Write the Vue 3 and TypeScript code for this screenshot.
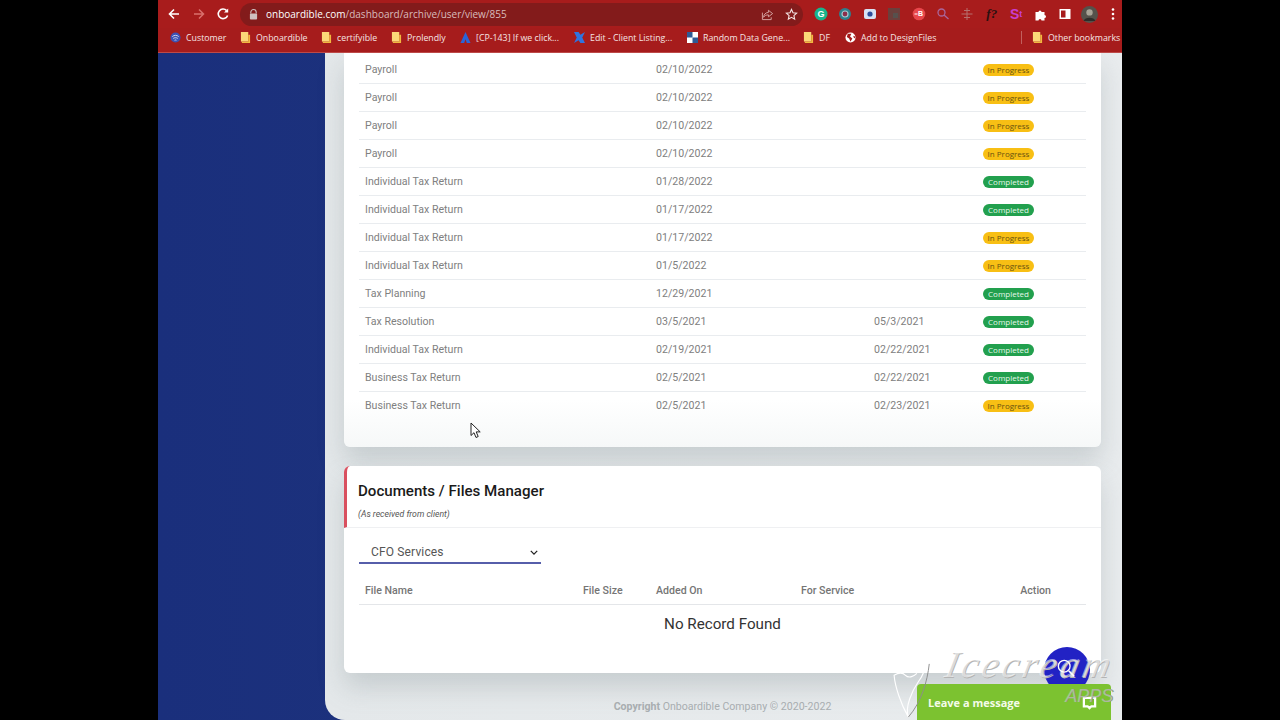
<script setup lang="ts">
interface Row {
  name: string;
  added: string;
  done?: string;
  status: 'In Progress' | 'Completed';
}

const rows: Row[] = [
  { name: 'Payroll', added: '02/10/2022', status: 'In Progress' },
  { name: 'Payroll', added: '02/10/2022', status: 'In Progress' },
  { name: 'Payroll', added: '02/10/2022', status: 'In Progress' },
  { name: 'Payroll', added: '02/10/2022', status: 'In Progress' },
  { name: 'Individual Tax Return', added: '01/28/2022', status: 'Completed' },
  { name: 'Individual Tax Return', added: '01/17/2022', status: 'Completed' },
  { name: 'Individual Tax Return', added: '01/17/2022', status: 'In Progress' },
  { name: 'Individual Tax Return', added: '01/5/2022', status: 'In Progress' },
  { name: 'Tax Planning', added: '12/29/2021', status: 'Completed' },
  { name: 'Tax Resolution', added: '03/5/2021', done: '05/3/2021', status: 'Completed' },
  { name: 'Individual Tax Return', added: '02/19/2021', done: '02/22/2021', status: 'Completed' },
  { name: 'Business Tax Return', added: '02/5/2021', done: '02/22/2021', status: 'Completed' },
  { name: 'Business Tax Return', added: '02/5/2021', done: '02/23/2021', status: 'In Progress' },
];

const bookmarks = [
  { label: 'Customer', icon: 'globe', width: 70 },
  { label: 'Onboardible', icon: 'folder', width: 81 },
  { label: 'certifyible', icon: 'folder', width: 70 },
  { label: 'Prolendly', icon: 'folder', width: 69 },
  { label: '[CP-143] If we click...', icon: 'atlas', width: 114 },
  { label: 'Edit - Client Listing...', icon: 'cross', width: 113 },
  { label: 'Random Data Gene...', icon: 'grid', width: 116 },
  { label: 'DF', icon: 'folder', width: 42 },
  { label: 'Add to DesignFiles', icon: 'earth', width: 176 },
];
</script>

<template>
  <div class="stage">
    <div class="browser">
      <header class="toolbar">
        <div class="nav">
          <svg class="nav-icon" viewBox="0 0 16 16"><path d="M13 8H4M8 3.5 3.5 8 8 12.5" fill="none" stroke="#fff" stroke-width="1.6" /></svg>
          <svg class="nav-icon" viewBox="0 0 16 16"><path d="M3 8h9M8 3.5 12.5 8 8 12.5" fill="none" stroke="#d9706c" stroke-width="1.5" /></svg>
          <svg class="nav-icon" viewBox="0 0 16 16"><path d="M12.6 9.4A4.8 4.8 0 1 1 11.6 4.6" fill="none" stroke="#fff" stroke-width="1.6" /><path d="M13.2 2.4v4.2H9z" fill="#fff" /></svg>
        </div>
        <div class="omnibox">
          <svg class="lock" viewBox="0 0 10 12"><path d="M2 5V3.5a3 3 0 0 1 6 0V5" fill="none" stroke="#cfc0c0" stroke-width="1.2" /><rect x="1" y="5" width="8" height="6.5" rx="1" fill="#cfc0c0" /></svg>
          <span class="url"><b>onboardible.com</b>/dashboard/archive/user/view/855</span>
          <svg class="omni-icon share" viewBox="0 0 14 14"><path d="M8 2.5 12.5 6 8 9.5V7.4C5.500 7.400 4 8.200 2.800 10 3 7 4.800 5 8 4.700z M1.500 5v7.500h9.500V10" fill="none" stroke="#d8a9a6" stroke-width="1" /></svg>
          <svg class="omni-icon" viewBox="0 0 14 14"><path d="m7 1.600 1.600 3.600 3.900.4-2.900 2.600.8 3.800L7 10.100l-3.400 2 .8-3.800L1.500 5.600l3.900-.4z" fill="none" stroke="#f3e4e3" stroke-width="1.200" /></svg>
        </div>
        <div class="extensions">
          <span class="ext"><svg viewBox="0 0 14 14"><circle cx="7" cy="7" r="6.500" fill="#19b58d" /><text x="7" y="10" text-anchor="middle" class="ext-text" fill="#fff">G</text></svg></span>
          <span class="ext"><svg viewBox="0 0 14 14"><circle cx="7" cy="7" r="6" fill="#2e7f8e" /><circle cx="7" cy="7" r="3" fill="#8b2d4b" stroke="#a5cbd2" stroke-width="1.200" /></svg></span>
          <span class="ext"><svg viewBox="0 0 14 14"><rect x="1" y="2" width="12" height="10" rx="2" fill="#d7e2f5" /><circle cx="7" cy="7" r="2.600" fill="#2d4d9c" /></svg></span>
          <span class="ext"><svg viewBox="0 0 14 14"><rect x="1" y="1" width="12" height="12" fill="#6c3f3c" /><rect x="6" y="6" width="5" height="5" fill="#57504d" /></svg></span>
          <span class="ext"><svg viewBox="0 0 14 14"><circle cx="7" cy="7" r="6.300" fill="#e8474c" /><text x="8.500" y="9.300" text-anchor="middle" class="ext-small" fill="#fff">B</text><path d="M2.500 7h3" stroke="#fff" stroke-width="1" /></svg></span>
          <span class="ext"><svg viewBox="0 0 14 14"><circle cx="5.500" cy="5.500" r="3.500" fill="none" stroke="#a9679c" stroke-width="1.300" /><path d="m8 8 4.500 4" stroke="#a9679c" stroke-width="1.300" /></svg></span>
          <span class="ext"><svg viewBox="0 0 14 14"><path d="M7 1v12M1.500 7h11M4 3.500h6M4 10.500h6" stroke="#b66f6c" stroke-width="1" /></svg></span>
          <span class="ext ext-f">f?</span>
          <span class="ext ext-s">S<small>t</small></span>
          <span class="ext"><svg viewBox="0 0 14 14"><path d="M1.500 5h3a1.500 1.500 0 1 1 3 0h3v3a1.500 1.500 0 1 1 0 3v2.500h-3a1.500 1.500 0 1 0-3 0h-3z" fill="#fff" /></svg></span>
          <span class="ext"><svg viewBox="0 0 14 14"><rect x="1.500" y="2" width="11" height="10" fill="#fff" /><rect x="3" y="3.500" width="4.500" height="7" fill="#a81c1c" /></svg></span>
          <span class="ext ext-avatar"><svg viewBox="0 0 16 16"><circle cx="8" cy="8" r="8" fill="#55524b" /><circle cx="8" cy="6" r="3" fill="#a9a497" /><path d="M2.500 14c1-4 10-4 11 0" fill="#2e2c29" /></svg></span>
          <span class="ext ext-menu"><svg viewBox="0 0 14 14"><circle cx="7" cy="2.500" r="1.300" fill="#fff" /><circle cx="7" cy="7" r="1.300" fill="#fff" /><circle cx="7" cy="11.500" r="1.300" fill="#fff" /></svg></span>
        </div>
      </header>

      <nav class="bookmarks">
        <div v-for="b in bookmarks" :key="b.label" class="bookmark" :style="{ width: b.width + 'px' }">
          <svg class="bm-icon" viewBox="0 0 12 12">
            <template v-if="b.icon === 'folder'">
              <path d="M1 0h8v10.500H1z" fill="#fbd878" />
              <path d="M9 3h2v9H2v-1.500h7z" fill="#f2b840" />
            </template>
            <template v-else-if="b.icon === 'globe'">
              <circle cx="6" cy="6" r="5.500" fill="#3c52b5" />
              <path d="M2.500 5c2-1.800 5-1.800 7 0M3.500 7c1.500-1 3.500-1 5 0M5 9c.7-.4 1.300-.4 2 0" fill="none" stroke="#d9def0" stroke-width="1" />
            </template>
            <template v-else-if="b.icon === 'atlas'">
              <path d="M6 0 11.500 12H7.500L6 8 4.500 12H.5z" fill="#2a64d8" />
            </template>
            <template v-else-if="b.icon === 'cross'">
              <path d="M0 0h5l2 3 5-3-3 6 3 6H7L5 9 0 12l3-6z" fill="#2f74e0" />
            </template>
            <template v-else-if="b.icon === 'grid'">
              <rect width="12" height="12" fill="#fff" />
              <rect width="6" height="6" fill="#2e5b96" />
              <rect x="6" y="6" width="6" height="6" fill="#2e5b96" />
            </template>
            <template v-else>
              <circle cx="6" cy="6" r="5.500" fill="#fff" />
              <path d="M3 2h4L5.500 5 8 7 6 10.500 4.500 7 2 5.500z M9 4l2 1v2l-1.500-1z" fill="#a61c1c" />
            </template>
          </svg>
          <span>{{ b.label }}</span>
        </div>
        <div class="bm-divider"></div>
        <div class="bookmark">
          <svg class="bm-icon" viewBox="0 0 12 12"><path d="M1 0h8v10.500H1z" fill="#fbd878" /><path d="M9 3h2v9H2v-1.500h7z" fill="#f2b840" /></svg>
          <span>Other bookmarks</span>
        </div>
      </nav>

      <div class="page">
        <aside class="sidebar"></aside>
        <main class="main">
          <section class="card card-services">
            <div v-for="(r, i) in rows" :key="i" class="row">
              <span>{{ r.name }}</span>
              <span>{{ r.added }}</span>
              <span>{{ r.done }}</span>
              <span>
                <em class="badge" :class="r.status === 'Completed' ? 'badge-done' : 'badge-progress'">{{ r.status }}</em>
              </span>
            </div>
          </section>

          <section class="card card-docs">
            <div class="docs-head">
              <h2>Documents / Files Manager</h2>
              <p>(As received from client)</p>
            </div>
            <div class="docs-body">
              <div class="select">
                <span>CFO Services</span>
                <svg viewBox="0 0 10 6"><path d="m1 1 4 4 4-4" fill="none" stroke="#222" stroke-width="1.600" /></svg>
              </div>
              <div class="file-head">
                <span>File Name</span>
                <span>File Size</span>
                <span>Added On</span>
                <span>For Service</span>
                <span class="action">Action</span>
              </div>
              <div class="empty">No Record Found</div>
            </div>
          </section>

          <footer class="footer"><b>Copyright</b> Onboardible Company © 2020-2022</footer>
        </main>

        <svg class="cursor" viewBox="0 0 12 17"><path d="M1 1v12.500l3-2.800 2 4.800 2.200-1-2-4.600h4z" fill="#fff" stroke="#222" stroke-width="1" /></svg>
        <div class="help-bubble"></div>
        <div class="chat">
          <span>Leave a message</span>
          <svg viewBox="0 0 16 16"><path d="M2 3h12v9h-4l-2 2-2-2H2z" fill="none" stroke="#fff" stroke-width="2.400" /></svg>
        </div>
        <div class="watermark">
          <svg class="wm-mark" viewBox="0 0 46 80"><path d="M33 2c3 12 2 28-6 38C20 50 12 68 16 78 8 64 2 46 1 34c5-3 9-3 12 0s8 2 12-2" fill="none" stroke="#fff" stroke-width="1.200" /><path d="M16 78C30 62 36 40 38 22" fill="none" stroke="#8c8c8c" stroke-width="1" /></svg>
          <span class="wm-name">Icecream</span>
          <span class="wm-apps">APPS</span>
          <svg class="wm-lens" viewBox="0 0 20 20"><circle cx="8" cy="8" r="6.500" fill="none" stroke="#fff" stroke-width="1.500" /><path d="m13 13 6 6" stroke="#fff" stroke-width="1.800" /></svg>
        </div>
      </div>
    </div>
  </div>
</template>

<style scoped>
.stage {
  display: flex;
  justify-content: center;
  height: 720px;
  background: #000;
  overflow: hidden;
}

.browser {
  display: flex;
  flex-direction: column;
  width: 964px;
  height: 720px;
}

.toolbar {
  display: flex;
  align-items: center;
  flex: none;
  height: 28px;
  padding-left: 8px;
  background: #a81c1c;
}

.nav {
  display: flex;
  flex: none;
  gap: 8.500px;
  width: 74px;
}

.nav-icon {
  width: 16px;
  height: 16px;
}

.omnibox {
  display: flex;
  align-items: center;
  flex: none;
  width: 563px;
  height: 23px;
  padding-left: 9px;
  border-radius: 12px;
  box-sizing: border-box;
  background: #831b1b;
}

.lock {
  width: 9px;
  height: 11px;
  margin-right: 8px;
}

.url {
  flex: 1;
  color: #d9bcbb;
  font: 10px "Open Sans", sans-serif;
}

.url b {
  color: #fff;
  font-weight: 500;
}

.omni-icon {
  width: 13px;
  height: 13px;
  margin-right: 5.500px;
}

.omni-icon.share {
  margin-right: 11px;
}

.extensions {
  display: flex;
  flex: none;
  margin-left: 5.800px;
}

.ext {
  display: flex;
  align-items: center;
  justify-content: center;
  flex: none;
  width: 24.400px;
  height: 16px;
}

.ext-menu {
  width: 24px;
  margin-right: -6px;
}

.ext svg {
  width: 14px;
  height: 14px;
}

.ext-avatar svg {
  width: 17px;
  height: 17px;
}

.ext-text {
  font: 700 9px "Liberation Sans", sans-serif;
}

.ext-small {
  font: 700 7px "Liberation Sans", sans-serif;
}

.ext-f {
  color: #2b1111;
  font: italic 700 13px "Liberation Serif", serif;
}

.ext-s {
  color: #c93fd0;
  font: 700 14px "Liberation Sans", sans-serif;
}

.ext-s small {
  font-size: 9px;
}

.bookmarks {
  display: flex;
  align-items: center;
  flex: none;
  height: 25px;
  padding: 0 0 5px 12px;
  background: #a61c1c;
  border-bottom: 1px solid #bd4a48;
  box-sizing: border-box;
}

.bookmark {
  display: flex;
  align-items: center;
  flex: none;
  gap: 5px;
  color: #f5e4e3;
  font: 8.800px "Open Sans", sans-serif;
  white-space: nowrap;
}

.bm-icon {
  flex: none;
  width: 11px;
  height: 11px;
}

.bm-divider {
  flex: none;
  width: 1px;
  height: 13px;
  margin-right: 10px;
  background: #c2605e;
}

.page {
  position: relative;
  display: flex;
  flex: 1;
  min-height: 0;
  overflow: hidden;
  background: linear-gradient(90deg, #1a2f7c, #23397f);
}

.sidebar {
  flex: none;
  width: 167px;
}

.main {
  display: flex;
  flex: 1;
  flex-direction: column;
  padding: 0 21px 0 19px;
  border-bottom-left-radius: 20px;
  background: linear-gradient(90deg, #e4e8ea, #e9ecee);
  font-family: Roboto, sans-serif;
}

.card {
  flex: none;
  background: #fff;
  border-radius: 0 0 6px 6px;
  box-shadow: 0 14px 26px rgba(120, 132, 138, 0.28);
}

.card-services {
  height: 394px;
  padding: 3px 15px 0;
  box-sizing: border-box;
  background: linear-gradient(#fff 88%, #f6f8f8);
}

.row {
  display: grid;
  grid-template-columns: 291px 218px 109px 109px;
  align-items: center;
  height: 28px;
  border-bottom: 1px solid #e9ecef;
  box-sizing: border-box;
  color: #808080;
  font-size: 10.600px;
}

.row:last-child {
  border-bottom-color: transparent;
}

.row span {
  padding-left: 6px;
}

.badge {
  display: inline-block;
  width: 51px;
  height: 12px;
  border-radius: 6px;
  font: 8px/12px "Open Sans", sans-serif;
  text-align: center;
}

.badge-progress {
  background: #f8bf14;
  color: #6a5210;
}

.badge-done {
  background: #22a04e;
  color: #e5f7ea;
}

.card-docs {
  height: 207px;
  margin-top: 19px;
  border-radius: 6px;
}

.docs-head {
  height: 62px;
  padding: 16px 0 0 11px;
  border-left: 3px solid #d9505f;
  border-bottom: 1px solid #eff0f2;
  border-top-left-radius: 6px;
  box-sizing: border-box;
}

.docs-head h2 {
  margin: 0;
  color: #1a1a1a;
  font-size: 15.100px;
  font-weight: 500;
  line-height: 18px;
}

.docs-head p {
  margin: 8px 0 0;
  color: #555;
  font-size: 8.700px;
  font-style: italic;
  line-height: 12px;
}

.docs-body {
  padding: 13px 15px 0;
}

.select {
  display: flex;
  align-items: center;
  justify-content: space-between;
  width: 182px;
  height: 23px;
  padding: 1px 3px 0 12px;
  border-bottom: 2px solid #565eaa;
  box-sizing: border-box;
  color: #555;
  font-size: 12px;
  letter-spacing: 0.150px;
}

.select svg {
  width: 8px;
  height: 5px;
}

.file-head {
  display: grid;
  grid-template-columns: 218px 73px 145px 1fr auto;
  align-items: center;
  height: 28px;
  margin-top: 12px;
  padding: 0 35px 0 6px;
  border-bottom: 1px solid #e4e6e9;
  color: #757575;
  font-size: 10.600px;
  font-weight: 500;
}

.empty {
  padding-top: 10px;
  color: #333;
  font-size: 15.200px;
  line-height: 18px;
  text-align: center;
}

.footer {
  margin-top: 27px;
  color: #a8adb0;
  font-size: 10.600px;
  line-height: 14px;
  text-align: center;
}

.footer b {
  font-weight: 700;
}

.cursor {
  position: absolute;
  top: 369px;
  left: 312px;
  width: 12px;
  height: 17px;
}

.help-bubble {
  position: absolute;
  top: 594px;
  left: 886px;
  width: 46px;
  height: 46px;
  border-radius: 50%;
  background: #2222c4;
}

.chat {
  position: absolute;
  top: 631px;
  left: 759px;
  display: flex;
  align-items: center;
  justify-content: space-between;
  width: 194px;
  height: 36px;
  padding: 0 14px 0 11px;
  border-radius: 4px 4px 0 0;
  box-sizing: border-box;
  background: #7cc230;
  color: #f4fbe9;
  font: 700 11px "Open Sans", sans-serif;
}

.chat svg {
  width: 15px;
  height: 15px;
}

.watermark {
  position: absolute;
  top: 587px;
  left: 730px;
  width: 234px;
  height: 80px;
  pointer-events: none;
}

.wm-mark {
  position: absolute;
  top: 3px;
  left: 4px;
  width: 46px;
  height: 76px;
}

.wm-name {
  position: absolute;
  top: 2px;
  left: 58px;
  color: rgba(255, 255, 255, 0.55);
  font: italic 38px "Liberation Serif", serif;
  letter-spacing: 3.500px;
  text-shadow: 1px 1px 0 #b4b4b4;
  transform: skewX(-12deg);
}

.wm-apps {
  position: absolute;
  top: 46px;
  left: 177px;
  color: rgba(255, 255, 255, 0.3);
  font: italic 18px "Liberation Sans", sans-serif;
  text-shadow: 1px 0 0 #8e9a80;
}

.wm-lens {
  position: absolute;
  top: 19px;
  left: 169px;
  width: 18px;
  height: 18px;
}
</style>

<style>
body {
  margin: 0;
}
</style>
